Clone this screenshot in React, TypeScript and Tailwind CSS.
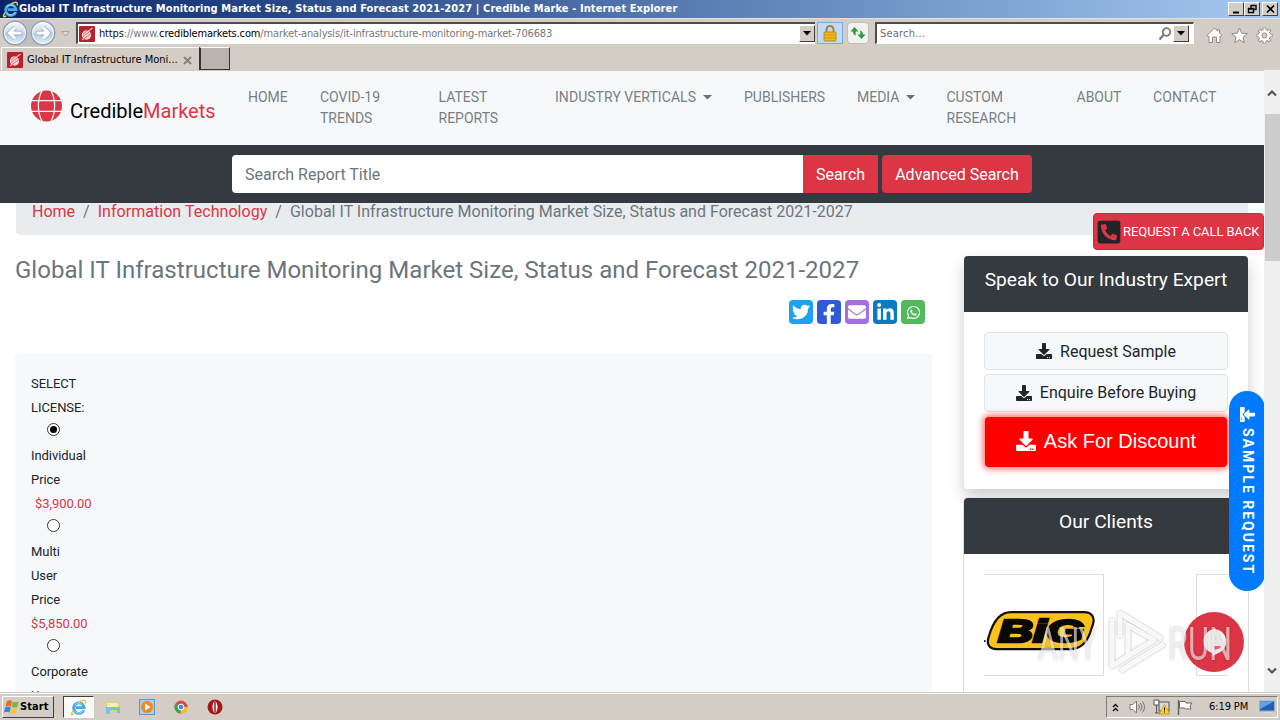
import { FaDownload, FaEnvelope, FaFacebookF, FaLinkedinIn, FaPhoneSquareAlt, FaTwitter, FaWhatsapp } from "react-icons/fa";

const TAHOMA = "font-['DejaVu_Sans_Condensed','DejaVu_Sans',sans-serif]";

const navItems = [
  { label: "HOME", cls: "w-[72px]" },
  { label: "COVID-19 TRENDS", cls: "w-[118.5px]" },
  { label: "LATEST REPORTS", cls: "w-[116.5px]" },
  { label: "INDUSTRY VERTICALS", cls: "w-[189px] tracking-[0.05px]", caret: true },
  { label: "PUBLISHERS", cls: "w-[113px]" },
  { label: "MEDIA", cls: "w-[89.5px]", caret: true },
  { label: "CUSTOM RESEARCH", cls: "w-[130px]" },
  { label: "ABOUT", cls: "w-[76.5px]" },
  { label: "CONTACT", cls: "w-[80px] tracking-[0.1px]" },
];

const shares = [
  { Icon: FaTwitter, cls: "bg-[#1da1f2]", size: 18 },
  { Icon: FaFacebookF, cls: "bg-[#2d5bd8] pt-1", size: 20 },
  { Icon: FaEnvelope, cls: "bg-[#a570dc]", size: 18 },
  { Icon: FaLinkedinIn, cls: "bg-[#0a7bc0]", size: 19 },
  { Icon: FaWhatsapp, cls: "bg-[#52b95c]", size: 15 },
];

export default function App() {
  return (
    <div className="flex h-[720px] w-[1280px] flex-col overflow-hidden bg-[#d4cdc6] font-[Roboto,sans-serif] text-[#212529]">
      <TitleBar />
      <AddressBar />
      <TabRow />
      <div className="flex h-[622px] shrink-0">
        <WebPage />
        <Scrollbar />
      </div>
      <Taskbar />
    </div>
  );
}

function TitleBar() {
  return (
    <div className={`flex h-[18px] shrink-0 items-center bg-linear-to-r from-[#0a246a] to-[#a6caf0] pl-[2px] pr-[2px] text-white ${TAHOMA}`}>
      <IeLogo size={17} />
      <span className="flex-1 whitespace-nowrap pt-px text-[11px] font-bold tracking-[0.09px]">
        Global IT Infrastructure Monitoring Market Size, Status and Forecast 2021-2027 | Credible Marke - Internet Explorer
      </span>
      <div className="flex">
        <WinButton><path d="M3 9.5h6" strokeWidth="2" /></WinButton>
        <WinButton><path d="M5 2.5h5v4H8M5 2v3M2.5 5.5h5v4h-5zM2 6h6" strokeWidth="1.4" /></WinButton>
        <span className="w-[2px]" />
        <WinButton><path d="M3 2.5l7 7M10 2.5l-7 7" strokeWidth="1.7" /></WinButton>
      </div>
    </div>
  );
}

function WinButton({ children }: { children: React.ReactNode }) {
  return (
    <div className="flex h-[14px] w-4 items-center justify-center border border-t-white border-r-[#404040] border-b-[#404040] border-l-white bg-[#d4cdc6]">
      <svg width="13" height="12" viewBox="0 0 13 12" fill="none" stroke="#000">{children}</svg>
    </div>
  );
}

function IeLogo({ size }: { size: number }) {
  return (
    <svg width={size} height={size} viewBox="0 0 18 18" fill="none" className="shrink-0">
      <path d="M14.600 11.800a5.600 5.600 0 1 1 .4-2.600H6" stroke="#3fa9ee" strokeWidth="3" />
      <path d="M13.800 12a5.400 5.400 0 0 1-9 .8M5 6.500a5 5 0 0 1 8-.5" stroke="#a6def9" strokeWidth="1" />
      <path d="M3.500 12C.5 16 1 18 4.500 15.800M9 3.800C13.500.5 17.500.5 16 4.800" stroke="#f0c83c" strokeWidth="1.600" />
    </svg>
  );
}

function SiteIcon() {
  return (
    <svg width="16" height="16" viewBox="0 0 16 16" className="shrink-0">
      <rect width="16" height="16" rx="1" fill="#b9202c" />
      <circle cx="7.500" cy="9" r="4.700" fill="#f6d3d3" />
      <path d="M4 8l5-4M4 10.500l7-5M5 12.500l7-5" stroke="#cc5a60" strokeWidth=".8" />
      <path d="M9.500 5l4-3M3 14l2-1.500" stroke="#f0b8b8" strokeWidth="1.200" />
    </svg>
  );
}

function ArrowCircle({ flip }: { flip?: boolean }) {
  return (
    <svg width="26" height="26" viewBox="0 0 26 26" className={flip ? "-scale-x-100" : ""}>
      <defs>
        <linearGradient id="orb" x2="0" y2="1">
          <stop offset="0" stopColor="#f4f8fd" />
          <stop offset=".45" stopColor="#d3deeb" />
          <stop offset=".55" stopColor="#b9cde0" />
          <stop offset="1" stopColor="#e0f3fd" />
        </linearGradient>
      </defs>
      <circle cx="13" cy="13" r="11.700" fill="url(#orb)" stroke="#939eab" strokeWidth="1.200" />
      <circle cx="13" cy="13" r="10.500" fill="none" stroke="#fff" strokeOpacity=".7" />
      <path d="M20 13H8M13 7.500L7.500 13l5.500 5.500" fill="none" stroke="#8fa5be" strokeWidth="4.600" />
      <path d="M19.500 13H8M13 7.500L7.500 13l5.500 5.500" fill="none" stroke="#fff" strokeWidth="3.200" />
    </svg>
  );
}

function DropButton() {
  return (
    <div className="flex h-[17px] w-4 shrink-0 items-center justify-center border border-t-white border-r-[#404040] border-b-[#404040] border-l-white bg-[#d4cdc6]">
      <svg width="8" height="5"><path d="M0 0h8L4 4.500z" fill="#000" /></svg>
    </div>
  );
}

function AddressBar() {
  return (
    <div className={`flex h-[29px] shrink-0 items-start border-t border-[#e5e0da] pt-[2px] text-[11px] ${TAHOMA}`}>
      <div className="ml-[2px] -mt-px flex gap-[2px] rounded-full bg-[#c0bfc0]">
        <ArrowCircle />
        <ArrowCircle flip />
      </div>
      <svg width="9" height="6" viewBox="0 0 9 6" className="ml-[5px] mt-[10px] mr-[6px]"><path d="M.5.5h8l-4 4.500z" fill="#ddd8d2" stroke="#aaa49e" /></svg>
      <div className="mt-[1px] flex h-[22px] w-[739px] items-center border-t-2 border-b border-l-2 border-t-[#504c48] border-b-white border-l-[#504c48] bg-white pl-[1px]">
        <SiteIcon />
        <span className="ml-1 flex-1 whitespace-nowrap pt-[2px] text-[#777] tracking-[-0.15px]">
          <span className="text-[#111]">https</span>://www.<span className="text-black">crediblemarkets.com</span>/market-analysis/it-infrastructure-monitoring-market-706683
        </span>
        <DropButton />
      </div>
      <div className="ml-[2px] mt-[1px] flex h-[22px] w-[26px] items-center justify-center border border-[#7ba7e8] bg-[#c3daf6]">
        <svg width="14" height="17" viewBox="0 0 14 17">
          <path d="M3.500 8V4.500a3.500 3.500 0 0 1 7 0V8" fill="none" stroke="#a8842c" strokeWidth="2" />
          <rect x="1" y="7" width="12" height="9" rx="1" fill="#efb820" stroke="#b98618" />
          <path d="M1.500 10h11M1.500 13h11" stroke="#c79320" />
        </svg>
      </div>
      <div className="ml-1 mt-[1px] flex h-[22px] w-[22px] items-center justify-center rounded-sm border border-[#c2bdb8] bg-[#f2f1ef]">
        <svg width="16" height="16" viewBox="0 0 16 16" fill="#289b34">
          <path d="M4.500 2L.5 6.500H3C3.200 9 4 10 6 10.500 5.300 9 5.500 7.800 5.800 6.500H8.500z" />
          <path d="M11.500 14l4-4.500H13C12.800 7 12 6 10 5.500c.7 1.500.5 2.700.2 4H7.500z" />
        </svg>
      </div>
      <div className="ml-[6px] mt-[1px] flex h-[22px] w-[319px] items-center border-t-2 border-r border-b border-l-2 border-t-[#504c48] border-r-white border-b-white border-l-[#504c48] bg-white pl-[3px] text-[#6d6d6d]">
        <span className="flex-1 pt-[2px] tracking-[0.2px]">Search...</span>
        <svg width="14" height="14" viewBox="0 0 14 14" fill="none" stroke="#777"><circle cx="8.500" cy="5" r="3.800" strokeWidth="1.800" /><path d="M5.500 8L1.500 12.500" strokeWidth="2.200" /></svg>
        <span className="w-[1px]" />
        <DropButton />
        <span className="w-1" />
      </div>
      <div className="ml-[12px] mt-[6px] flex gap-[8px]">
        <svg width="17" height="17" viewBox="0 0 17 17" fill="#fff" stroke="#8f8b87"><path d="M8.500 1L1 8.500l1.500 1L3 9v6.500h3.500V10h4v5.500H14V9l.5.500 1.500-1L13.500 6V2.500h-2V4z" /></svg>
        <svg width="17" height="17" viewBox="0 0 17 17" fill="#fff" stroke="#8f8b87"><path d="M8.500 1l2.200 5.200 5.600.4L12 10.200l1.300 5.500-4.800-3-4.800 3L5 10.200.7 6.600l5.600-.4z" /></svg>
        <svg width="17" height="17" viewBox="0 0 17 17" fill="none">
          <path d="M8.500.5v16M.5 8.500h16M2.800 2.800l11.400 11.400M14.200 2.800L2.800 14.200" stroke="#8f8b87" strokeWidth="3.600" />
          <circle cx="8.500" cy="8.500" r="6" fill="#fff" stroke="#8f8b87" />
          <path d="M8.500 1.200v14.600M1.200 8.500h14.600M3.400 3.400l10.200 10.200M13.600 3.400L3.400 13.600" stroke="#fff" strokeWidth="2" />
          <circle cx="8.500" cy="8.500" r="2.500" fill="#d4cdc6" stroke="#8f8b87" />
        </svg>
      </div>
    </div>
  );
}

function TabRow() {
  return (
    <div className={`flex h-[23px] shrink-0 pl-[1px] text-[11px] text-black ${TAHOMA}`}>
      <div className="flex h-[23px] w-[198px] items-center border-t border-l border-white pl-[5px] pt-[2px]">
        <SiteIcon />
        <span className="ml-[4px] w-[156px] whitespace-nowrap">Global IT Infrastructure Moni...</span>
        <svg width="9" height="9" viewBox="0 0 9 9"><path d="M1 1l7 7M8 1L1 8" stroke="#85807b" strokeWidth="2" /></svg>
      </div>
      <div className="h-[23px] w-[31px] border-t border-r border-b border-l-2 border-t-white border-r-[#333] border-b-[#333] border-l-[#333] bg-[#bbb4ae]" />
    </div>
  );
}

function WebPage() {
  return (
    <div className="relative mt-[1px] flex h-[621px] w-[1264px] flex-col overflow-hidden bg-white">
      <header className="flex h-[74px] shrink-0 bg-[#f5f9fb]">
        <div className="flex w-[248px] shrink-0 pl-[31px] pt-[19px]">
          <GlobeLogo />
          <span className="ml-2 mt-[6px] text-[20px] leading-[30px] text-black">
            Credible<span className="text-[#dc3545]">Markets</span>
          </span>
        </div>
        <nav className="flex pt-4 text-[14px] leading-[21px] text-[#7b7f82]">
          {navItems.map((item) => (
            <div key={item.label} className={`shrink-0 ${item.cls}`}>
              {item.caret ? (
                <span className="flex items-center whitespace-nowrap">
                  {item.label}
                  <svg width="9" height="5" className="ml-[7px]"><path d="M0 0h9L4.500 4.500z" fill="#6c7074" /></svg>
                </span>
              ) : (
                <span className="block max-w-[88px]">{item.label}</span>
              )}
            </div>
          ))}
        </nav>
      </header>

      <div className="flex h-[58px] shrink-0 bg-[#343a40] pl-[232px] pt-[10px] text-[16px] leading-[38px] text-white">
        <div className="h-[38px] w-[571px] rounded-l bg-white pl-[13px] pt-px text-[#6c757d]">Search Report Title</div>
        <button className="h-[38px] w-[75px] bg-[#dc3545] pt-px leading-[37px]">Search</button>
        <button className="ml-1 h-[38px] w-[150px] rounded bg-[#dc3545] pt-px leading-[37px]">Advanced Search</button>
      </div>

      <div className="mx-4 flex h-[32px] shrink-0 rounded-b bg-[#e9ecef] pl-4 text-[16px] leading-[17px] text-[#dc3545]">
        <span>Home</span>
        <span className="px-2 text-[#6c757d]">/</span>
        <span className="tracking-[0.04px]">Information Technology</span>
        <span className="px-2 text-[#6c757d]">/</span>
        <span className="tracking-[0.015px] text-[#6c757d]">Global IT Infrastructure Monitoring Market Size, Status and Forecast 2021-2027</span>
      </div>

      <div className="flex pl-[15px]">
        <Report />
        <Sidebar />
      </div>

      <div className="absolute top-[142px] right-0 flex h-[37px] w-[171px] items-center rounded border border-[#c92a3a] bg-[#dc3545] pl-[2px] text-[13px] text-white">
        <FaPhoneSquareAlt size={26} className="shrink-0 text-[#212529]" />
        <span className="ml-[1px] whitespace-nowrap tracking-[-0.06px]">REQUEST A CALL BACK</span>
      </div>

      <div className="absolute top-[320px] right-0 h-[200px] w-[35px] overflow-hidden">
        <div className="flex h-[200px] w-[36px] items-center rounded-[18px] bg-[#007bff] pt-4 text-[14px] font-bold text-white [writing-mode:vertical-rl]">
          <FaDownload size={15} className="shrink-0 rotate-90" />
          <span className="mt-[6px] whitespace-nowrap tracking-[2px]">SAMPLE REQUEST</span>
        </div>
      </div>

      <div className="absolute top-[541px] left-[1184px] flex h-[60px] w-[60px] items-center justify-center rounded-full bg-[#dc3545]">
        <svg width="28" height="28" viewBox="0 0 28 28"><path d="M14 1a12.500 12.500 0 0 1 4 24.300L12.500 28v-2.600A12.500 12.500 0 0 1 14 1z" fill="#f3eeee" /><path d="M14 18h7.500q-2 4-7.500 3.500z" fill="#dc3545" fillOpacity=".75" /></svg>
      </div>
      <Watermark />
    </div>
  );
}

function GlobeLogo() {
  return (
    <svg width="31" height="32" viewBox="0 0 31 32" fill="none">
      <circle cx="15.500" cy="16" r="15.500" fill="#dc3545" />
      <g stroke="#f5f9fb" strokeWidth="1.300">
        <path d="M11.500 0C6 9 6 23 11.500 32M19.500 0C25 9 25 23 19.500 32" />
        <path d="M0 10.700h31M0 21.300h31" />
      </g>
    </svg>
  );
}

function Report() {
  return (
    <div className="w-[917px]">
      <h1 className="mt-[21px] whitespace-nowrap text-[24px] leading-[29px] tracking-[0.022px] text-[#6c757d]">
        Global IT Infrastructure Monitoring Market Size, Status and Forecast 2021-2027
      </h1>
      <div className="mt-[15px] flex justify-end gap-1 pr-[7px]">
        {shares.map(({ Icon, cls, size }, i) => (
          <div key={i} className={`flex h-6 w-6 items-center justify-center rounded text-white ${cls}`}>
            <Icon size={size} />
          </div>
        ))}
      </div>
      <div className="mt-[30px] flex h-[350px] flex-col rounded bg-[#f5f9fb] pl-4 pt-[18px] text-[13px] leading-6 tracking-[-0.06px]">
        <span>SELECT</span>
        <span>LICENSE:</span>
        <Radio checked />
        <span>Individual</span>
        <span>Price</span>
        <span className="pl-1 text-[#dc3545]">$3,900.00</span>
        <Radio />
        <span>Multi</span>
        <span>User</span>
        <span>Price</span>
        <span className="text-[#dc3545]">$5,850.00</span>
        <Radio />
        <span>Corporate</span>
        <span>User</span>
      </div>
    </div>
  );
}

function Radio({ checked }: { checked?: boolean }) {
  return (
    <div className="h-6 shrink-0 pl-4 pt-[3px]">
      <div className="flex h-[13px] w-[13px] items-center justify-center rounded-full border border-[#333] bg-white">
        {checked && <div className="h-[7px] w-[7px] rounded-full bg-black" />}
      </div>
    </div>
  );
}

function Sidebar() {
  return (
    <div className="ml-[31px] mt-[21px] w-[286px] shrink-0">
      <div className="ml-px h-[233px] w-[284px] rounded bg-white shadow-[0_8px_16px_rgba(0,0,0,0.2)]">
        <div className="h-[56px] rounded-t bg-[#343a40] pt-3 text-center text-[19.200px] leading-6 text-white">Speak to Our Industry Expert</div>
        <div className="flex flex-col px-5 pt-5 text-[16px]">
          <div className="flex h-[38px] items-center justify-center gap-2 rounded border border-[#dfe3e7] bg-[#f5f9fb] pt-px">
            <FaDownload size={16} className="-mt-px" /> Request Sample
          </div>
          <div className="mt-1 flex h-[38px] items-center justify-center gap-2 rounded border border-[#dfe3e7] bg-[#f5f9fb]">
            <FaDownload size={16} className="-mt-px" /> Enquire Before Buying
          </div>
          <div className="mx-px mt-[5px] flex h-[50px] items-center justify-center gap-2 rounded bg-[#f00] pb-[2px] font-['Liberation_Sans',sans-serif] text-[20px] text-white shadow-[0_0_6px_2px_rgba(255,0,0,0.6)]">
            <FaDownload size={20} /> Ask For Discount
          </div>
        </div>
      </div>
      <div className="mt-[8px] h-[240px] rounded border border-[#dfdfdf] bg-white">
        <div className="h-[56px] rounded-t bg-[#343a40] pt-[12px] text-center text-[19.200px] leading-6 text-white">Our Clients</div>
        <div className="flex justify-between px-5 pt-5">
          <div className="h-[102px] w-[120px] border-y border-r border-[#ddd] pt-[35px]">
            <BicLogo />
          </div>
          <div className="h-[102px] w-[32px] border-y border-l border-[#ddd]" />
        </div>
      </div>
    </div>
  );
}

function BicLogo() {
  return (
    <svg width="112" height="42" viewBox="0 0 112 42">
      <path d="M0 30h1.500v2H0z" fill="#222a55" />
      <path d="M27 2.200h73c8 0 11 5 9 12l-3 9c-4 11-10 16-20 16H13C5 39.200 2 34 5 26 9 12 16 2.200 27 2.200z" fill="#fcc21b" stroke="#111" strokeWidth="2.200" />
      <g fontFamily="'Liberation Sans', sans-serif" fontSize="32" fontWeight="bold" fontStyle="italic" stroke="#080808" strokeWidth="2.600" fill="#080808">
        <text y="32" textLength="86" x="14" lengthAdjust="spacingAndGlyphs">BiG</text>
      </g>
    </svg>
  );
}

function Watermark() {
  return (
    <svg width="200" height="68" viewBox="0 0 200 68" className="pointer-events-none absolute top-[536px] left-[1036px] drop-shadow-[0_0_1px_rgba(0,0,0,0.35)]" fill="none">
      <g fontFamily="Roboto, sans-serif" fontSize="47" fill="#fff" fillOpacity=".6">
        <text x="2" y="53" textLength="59" lengthAdjust="spacingAndGlyphs">ANY</text>
        <text x="132" y="53" textLength="64" lengthAdjust="spacingAndGlyphs">RUN</text>
      </g>
      <g stroke="#fff" strokeWidth="5" strokeOpacity=".9" strokeLinejoin="round">
        <path d="M92 49V18l26 15-42 26V12" />
        <path d="M84 30V6l42 26" />
        <path d="M84 64l44-27" />
      </g>
    </svg>
  );
}

function Scrollbar() {
  return (
    <div className="flex h-[622px] w-4 flex-col items-center bg-[#f0f0f0]">
      <svg width="10" height="8" viewBox="0 0 10 8" className="mt-[19px]"><path d="M1 6.500l4-4 4 4" fill="none" stroke="#555" strokeWidth="2.200" /></svg>
      <div className="mt-[17px] h-[147px] w-[15px] bg-[#cdcdcd]" />
      <svg width="10" height="8" viewBox="0 0 10 8" className="mt-auto mb-[17px]"><path d="M1 1.500l4 4 4-4" fill="none" stroke="#555" strokeWidth="2.200" /></svg>
    </div>
  );
}

function Taskbar() {
  return (
    <div className={`flex h-[28px] shrink-0 items-start border-t border-[#d4cdc6] bg-[#d4cdc6] pt-[3px] text-[11px] text-black shadow-[inset_0_1px_0_#fff] ${TAHOMA}`}>
      <div className="ml-[2px] flex h-[22px] w-[52px] items-center border border-t-white border-r-[#404040] border-b-[#404040] border-l-white pl-[1px] font-bold">
        <svg width="16" height="16" viewBox="0 0 16 16">
          <path d="M3 2c2-1 3.500-1 5 0L7 7.500c-2-1-3.500-1-5.500 0z" fill="#ea6a2e" />
          <path d="M8.700 2.500c2 1 3.500 1 6 0L13.200 8c-2 1-3.500 1-5.500 0z" fill="#7db53c" />
          <path d="M1.300 8.300c2-1 3.500-1 5.500 0L5.500 13.500c-2-1-3.500-1-5.500 0z" fill="#3c82d6" />
          <path d="M7.500 9c2 1 3.500 1 5.500 0l-1.300 5c-2 1-3.500 1-5.500 0z" fill="#f5c630" />
        </svg>
        <span className="pt-px tracking-[0.1px]">Start</span>
      </div>
      <div className="ml-[9px] flex h-[22px] w-[31px] items-center justify-center border border-t-[#404040] border-r-white border-b-white border-l-[#404040] bg-[#fbfaf9]">
        <IeLogo size={17} />
      </div>
      <div className="ml-[11px] mt-[3px] flex gap-[18px]">
        <svg width="16" height="16" viewBox="0 0 16 16"><path d="M1 2h6l1 1.500h6V12H1z" fill="#e8cf6c" /><path d="M2 4h11v4H2z" fill="#f8eeb5" /><path d="M1 8h14v6h-3v-3H5v4H1z" fill="#7ac0dc" /></svg>
        <svg width="16" height="16" viewBox="0 0 16 16"><rect x=".5" y=".5" width="15" height="15" fill="#a6cdf1" stroke="#5d98d2" /><circle cx="8" cy="8" r="6" fill="#f08a1c" /><path d="M6 4.500v7L11.500 8z" fill="#fff" /></svg>
        <svg width="16" height="16" viewBox="0 0 16 16"><circle cx="8" cy="8" r="6.500" fill="#dd4b3e" /><path d="M8 8L2.300 4.800A6.500 6.500 0 0 0 7.500 14.500z" fill="#35a853" /><path d="M8 8h6.500a6.500 6.500 0 0 1-7 6.500z" fill="#fbc116" /><circle cx="8" cy="8" r="2.900" fill="#4285f4" stroke="#fff" /></svg>
        <svg width="16" height="16" viewBox="0 0 16 16"><circle cx="8" cy="8" r="7.500" fill="#a81517" /><ellipse cx="8" cy="8" rx="2.500" ry="5.500" fill="#fff" /><path d="M8 3v10" stroke="#a81517" strokeWidth="1.500" /></svg>
      </div>
      <div className="ml-auto mr-[2px] flex h-[22px] w-[172px] items-center border border-t-[#807a75] border-r-white border-b-white border-l-[#807a75] pl-[5px]">
        <svg width="7" height="9" viewBox="0 0 7 9" fill="none" stroke="#000" strokeWidth="1.300"><path d="M1 4l2.500-2.500L6 4M1 8l2.500-2.500L6 8" /></svg>
        <svg width="16" height="14" viewBox="0 0 16 14" className="ml-[10px]" fill="none" stroke="#777"><path d="M1 4.500h3L7.500 1v12L4 9.500H1z" fill="#fff" /><path d="M9.500 4.500q2 2.500 0 5M11.500 3q3 4 0 8M13.500 1.500q4 5.500 0 11" /></svg>
        <svg width="17" height="16" viewBox="0 0 17 16" className="ml-2"><path d="M1 1h5v5H1zM3.500 6v8M2 14h6" fill="#fff" stroke="#555" /><rect x="6" y="3" width="10" height="9" fill="#d8d8d8" stroke="#555" /><path d="M11.500 5.500L17 15H6z" fill="#ffd21f" stroke="#a98300" strokeWidth=".6" /><path d="M11.500 8.500v3M11.500 12.500v1" stroke="#000" /></svg>
        <svg width="16" height="15" viewBox="0 0 16 15" className="ml-[7px]" fill="#fff" stroke="#666"><path d="M1.500 0v15" strokeWidth="1.500" /><path d="M2.500 1.500H8l1 1.500h6l-2 3 1 3H8.500L7.500 8h-5z" /></svg>
        <span className="ml-[16px] whitespace-nowrap pt-px tracking-[-0.1px]">6:19 PM</span>
        <svg width="16" height="14" viewBox="0 0 16 14" className="ml-[11px] shrink-0"><rect x=".5" y="1" width="15" height="10" fill="#245fb4" stroke="#8eaed8" /><path d="M1 1.500h14L1 9z" fill="#5fa0e8" /><path d="M4 12.500h8" stroke="#ddd" /></svg>
      </div>
    </div>
  );
}
